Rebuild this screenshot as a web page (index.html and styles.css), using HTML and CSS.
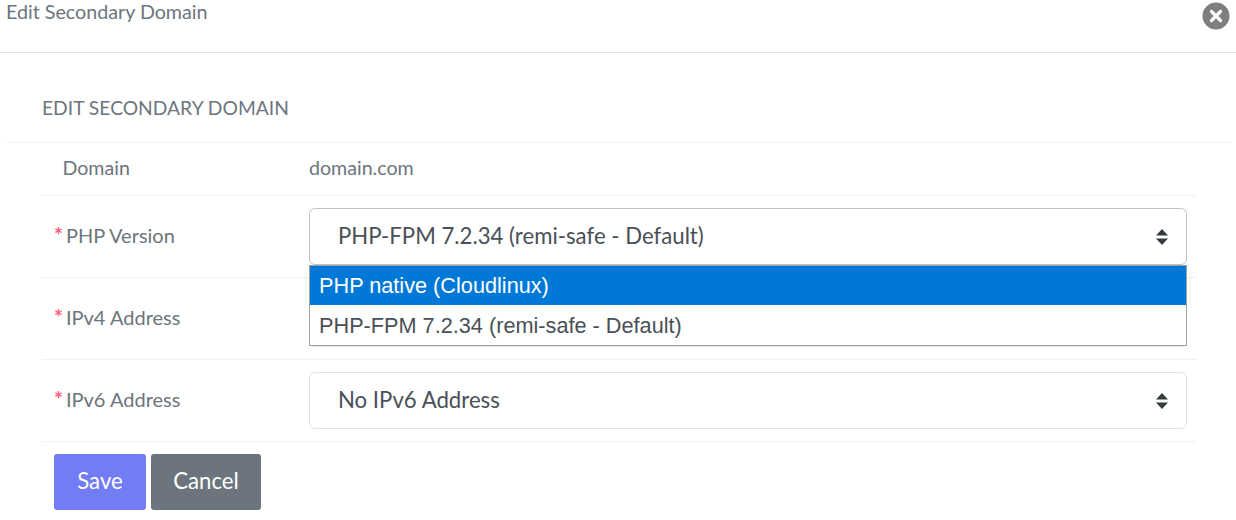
FILE: index.html
```html
<!DOCTYPE html>
<html lang="en">
<head>
<meta charset="UTF-8">
<meta name="viewport" content="width=device-width, initial-scale=1">
<title>Edit Secondary Domain</title>
<link rel="stylesheet" href="styles.css">
</head>
<body>
<div class="modal-head">
  <span class="modal-title">Edit Secondary Domain</span>
  <button class="close-btn" type="button" aria-label="Close">
    <svg viewBox="0 0 28 28" width="28" height="28">
      <circle cx="14" cy="14" r="13.5" fill="#7f7f7f"/>
      <path d="M9.5 9.5l9 9M18.5 9.5l-9 9" stroke="#fff" stroke-width="3.2" stroke-linecap="round"/>
    </svg>
  </button>
</div>

<div class="card">
  <h5 class="card-title">EDIT SECONDARY DOMAIN</h5>
  <form class="rows">
    <div class="row row-static">
      <span class="row-label">Domain</span>
      <span class="row-value">domain.com</span>
    </div>

    <div class="row row-open">
      <label class="row-label required"><b>*</b>PHP Version</label>
      <div class="select-wrap">
        <div class="select select-open">
          PHP-FPM 7.2.34 (remi-safe - Default)
          <svg class="arrows" viewBox="0 0 12 16" width="12" height="16"><path d="M6 0l6 6.5H0zM6 16L0 9.5h12z"/></svg>
        </div>
        <ul class="dropdown">
          <li class="active">PHP native (Cloudlinux)</li>
          <li>PHP-FPM 7.2.34 (remi-safe - Default)</li>
        </ul>
      </div>
    </div>

    <div class="row">
      <label class="row-label required"><b>*</b>IPv4 Address</label>
      <div class="select-wrap">
        <div class="select"></div>
      </div>
    </div>

    <div class="row">
      <label class="row-label required"><b>*</b>IPv6 Address</label>
      <div class="select-wrap">
        <div class="select">
          No IPv6 Address
          <svg class="arrows" viewBox="0 0 12 16" width="12" height="16"><path d="M6 0l6 6.5H0zM6 16L0 9.5h12z"/></svg>
        </div>
      </div>
    </div>

    <div class="actions">
      <button type="button" class="btn btn-save">Save</button>
      <button type="button" class="btn btn-cancel">Cancel</button>
    </div>
  </form>
</div>
</body>
</html>
```

FILE: styles.css
```css
* { box-sizing: border-box; }
html, body { height: 520px; overflow: hidden; }
body { margin: 0; background: #fff; color: #6c757d; font-family: Lato, "Noto Sans", sans-serif; font-size: 19.7px; }

.modal-head { height: 53px; padding: 0 6px; border-bottom: 1px solid #dee2e6; display: flex; justify-content: space-between; align-items: flex-start; }
.modal-title { line-height: 24px; font-size: 19.7px; }
.close-btn { border: 0; background: none; padding: 0; margin: 2px 0 0; display: block; height: 28px; }

.card { padding: 0 4px 0 6px; }
.card-title { margin: 0; padding: 43px 36px 0; height: 90px; line-height: 24px; font-size: 19.25px; font-weight: 400; border-bottom: 1px solid #eef0f3; }

.rows { margin: 0 36px; }
.row { height: 82px; padding: 12px 0; border-bottom: 1px solid #eef0f3; display: flex; align-items: center; }
.row-static { height: 53px; padding: 0 0 4px; }
.row-open { position: relative; z-index: 2; }
.row-label { width: 267px; padding-left: 12px; padding-bottom: 4px; font-size: 20px; }
.row-static .row-label { padding-left: 20.5px; padding-bottom: 0; font-size: 19.6px; }
.required b { color: #ff5c7c; font-weight: 700; font-size: 21px; margin-right: 3px; }
.row-value { font-size: 19.6px; }

.select-wrap { width: 878px; position: relative; }
.select { height: 57px; padding-left: 28px; border: 1px solid #dee2e6; border-radius: 6px; background: #fff; color: #495057; font-size: 22.2px; line-height: 54px; position: relative; }
.select-open { border-color: #b9c2cb; }
.arrows { position: absolute; right: 18px; top: 20px; fill: #343a40; }

.dropdown { position: absolute; left: 0; right: 0; top: 57px; margin: 0; padding: 0; list-style: none; background: #fff; border: 1px solid #a0a0a0; font-family: "Liberation Sans", sans-serif; font-size: 21.7px; color: #495057; }
.dropdown li { height: 40px; padding-left: 9px; line-height: 41px; }
.dropdown li.active { height: 39px; line-height: 39px; background: #0078d7; color: #fff; }

.actions { display: flex; gap: 5px; padding: 12px 0 0 12px; }
.btn { height: 56px; border: 0; border-radius: 3px; color: #fff; font-family: inherit; font-size: 22.2px; padding: 0 0 3px; }
.btn-save { width: 92px; background: #727cf5; }
.btn-cancel { width: 110px; background: #6c757d; }
```
